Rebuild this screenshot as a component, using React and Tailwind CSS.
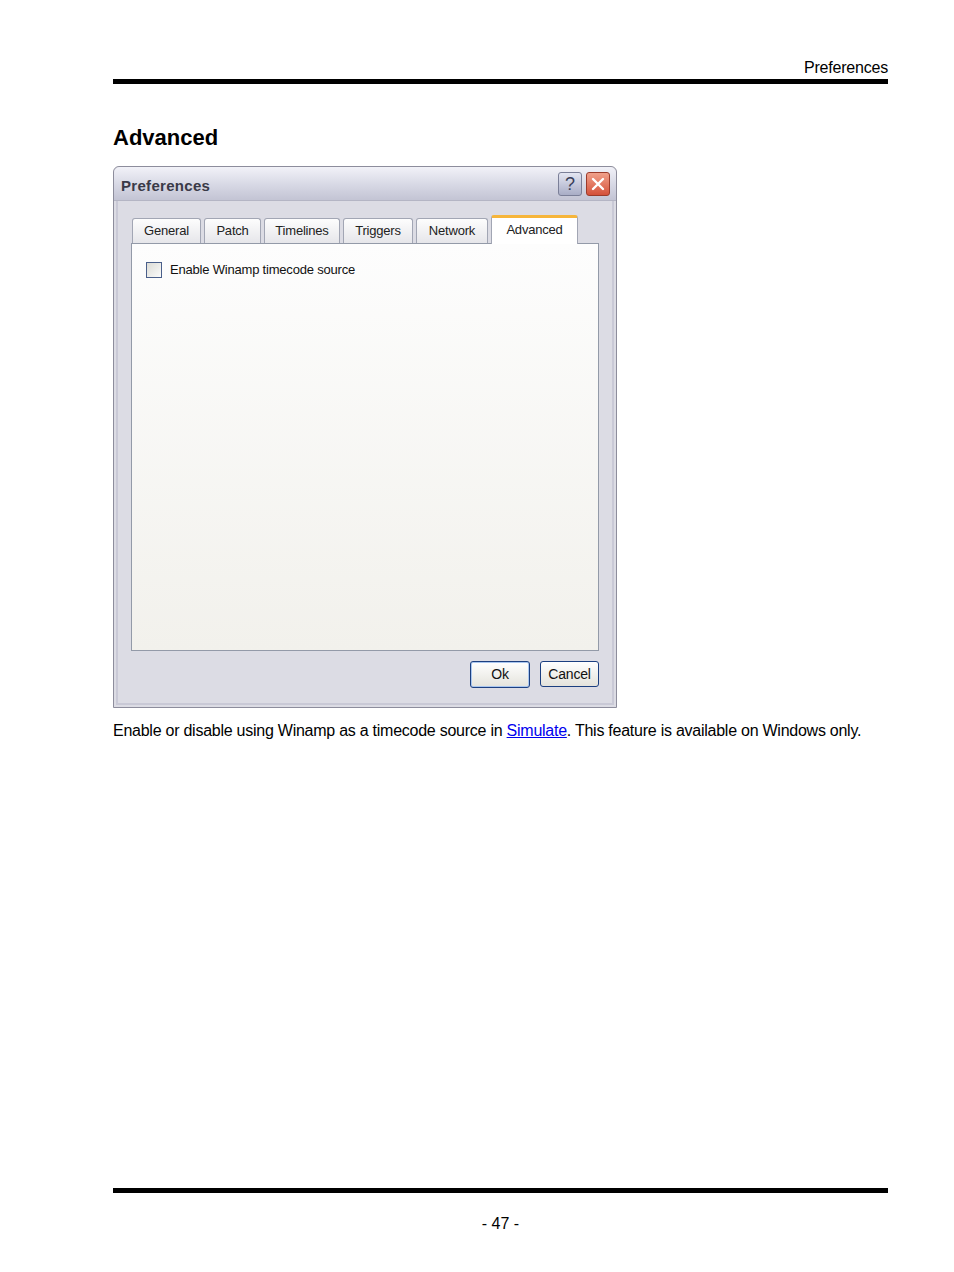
const tabs = [
  { label: 'General', w: 'w-[69px]' },
  { label: 'Patch', w: 'w-[57px]' },
  { label: 'Timelines', w: 'w-[76px]' },
  { label: 'Triggers', w: 'w-[70px]' },
  { label: 'Network', w: 'w-[72px]' },
];

function TitleButton({ kind }) {
  if (kind === 'help') {
    return (
      <div className="w-[24px] h-[24px] rounded-[3px] border border-[#7b7f98] bg-gradient-to-b from-[#e4e6f2] to-[#a9adc6] flex items-center justify-center text-[#3a3e58] text-[18px] leading-none">
        ?
      </div>
    );
  }
  return (
    <div className="w-[24px] h-[24px] rounded-[3px] border border-[#9b3b2b] bg-gradient-to-b from-[#f0a08a] to-[#d4503a] flex items-center justify-center">
      <svg width="14" height="14" viewBox="0 0 14 14">
        <path d="M2 2 L12 12 M12 2 L2 12" stroke="#fff" strokeWidth="2.4" strokeLinecap="round" />
      </svg>
    </div>
  );
}

function Dialog() {
  return (
    <div className="w-[504px] h-[542px] rounded-t-[6px] border border-[#8d8d9c] bg-[#dcdce4] flex flex-col text-[13px] tracking-[-0.2px]">
      <div className="h-[34px] rounded-t-[6px] bg-gradient-to-b from-[#f2f2f8] via-[#d9dae6] to-[#c3c4d4] flex items-center justify-between pl-[7px] pr-[6px] border-b border-[#b4b5c4]">
        <span className="text-[15px] font-bold text-[#3a3a48] pt-[6px] tracking-[0.3px]">Preferences</span>
        <div className="flex gap-[4px]">
          <TitleButton kind="help" />
          <TitleButton kind="close" />
        </div>
      </div>
      <div className="flex-1 mx-[2px] mb-[2px] border-x-2 border-b-2 border-[#c9c9d6] flex flex-col px-[13px]">
        <div className="flex items-end gap-[3px] mt-[13px] pl-[1px] h-[29px]">
          {tabs.map((t) => (
            <div key={t.label} className={`${t.w} h-[25px] rounded-t-[3px] border border-b-0 border-[#a2a6b4] bg-gradient-to-b from-[#fdfdfd] to-[#e6e6ea] flex items-center justify-center text-[#222]`}>
              {t.label}
            </div>
          ))}
          <div className="w-[87px] h-[29px] rounded-t-[3px] border-x border-[#a2a6b4] border-t-[3px] border-t-[#f6b53a] bg-white flex items-center justify-center text-[#222] -mb-[1px] relative z-10 pb-[2px]">
            Advanced
          </div>
        </div>
        <div className="h-[408px] border border-[#939aa8] bg-gradient-to-b from-[#fdfdfd] to-[#f2f1ec] pt-[16px] pl-[14px]">
          <div className="flex items-center gap-[8px]">
            <div className="w-[16px] h-[16px] border border-[#4a5f8a] bg-gradient-to-br from-[#dcdcd6] to-[#fbfbfa]" />
            <span className="text-[#111]">Enable Winamp timecode source</span>
          </div>
        </div>
        <div className="flex justify-end gap-[10px] mt-[10px]">
          <div className="w-[60px] h-[27px] rounded-[3px] border border-[#1c3f80] shadow-[inset_0_0_0_1px_#a9c6ef] bg-gradient-to-b from-[#ffffff] to-[#e4e3dc] flex items-center justify-center text-[14px] text-[#111]">
            Ok
          </div>
          <div className="w-[59px] h-[26px] rounded-[3px] border border-[#1c3f80] bg-gradient-to-b from-[#ffffff] to-[#e4e3dc] flex items-center justify-center text-[14px] text-[#111]">
            Cancel
          </div>
        </div>
      </div>
    </div>
  );
}

export default function App() {
  return (
    <div className="w-[954px] h-[1272px] bg-white" style={{ fontFamily: '"Liberation Sans", Arial, sans-serif' }}>
      <div className="pl-[113px] pr-[66px] pt-[58px] flex flex-col h-full">
        <div className="text-right text-[16px] leading-[19px] tracking-[-0.2px] text-black">Preferences</div>
        <div className="h-[5px] bg-black mt-[2px]" />
        <h1 className="text-[22px] font-bold text-black mt-[41px] leading-[26px]">Advanced</h1>
        <div className="mt-[15px]">
          <Dialog />
        </div>
        <p className="text-[16px] text-black mt-[13px] leading-[20px] tracking-[-0.25px]">
          Enable or disable using Winamp as a timecode source in{' '}
          <span className="text-[#0000ee] underline">Simulate</span>. This feature is available on Windows only.
        </p>
        <div className="flex-1" />
        <div className="h-[5px] bg-black" />
        <div className="text-center text-[16px] leading-[22px] text-black mt-[20px] mb-[37px]">- 47 -</div>
      </div>
    </div>
  );
}
